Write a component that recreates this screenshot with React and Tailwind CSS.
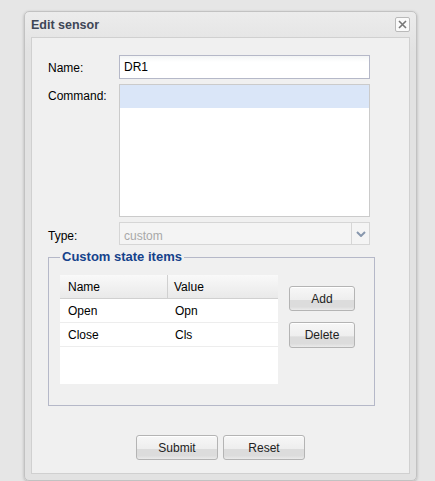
const btn =
  "h-[25px] rounded-[3px] border border-[#b4b4b4] bg-[linear-gradient(#f7f7f7_0%,#eeeeee_55%,#dcdcdc_57%,#dcdcdc_86%,#ebebeb_100%)] text-[12px] text-[#222] shadow-[inset_0_1px_0_#ffffff]";

const rows = [
  { name: 'Open', value: 'Opn' },
  { name: 'Close', value: 'Cls' },
];

const EditSensorDialog = () => {
  return (
    <div className="min-h-[481px] w-[435px] bg-[#e6e6e6] pt-[11px] font-['Liberation_Sans',Arial,sans-serif]">
      <div className="ml-[24px] w-[393px] rounded-[5px] border border-[#c2c2c2] bg-[linear-gradient(#ececec,#e2e2e2_40px,#e2e2e2)] px-[6px] pb-[6px] shadow-[0_1px_3px_rgba(0,0,0,0.25)]">
        <div className="flex h-[25px] items-center justify-between">
          <span className="pt-[1px] text-[12.5px] font-bold text-[#3e4656]">Edit sensor</span>
          <button className="flex h-[15px] w-[15px] items-center justify-center rounded-[2px] border border-[#b9b9b9] bg-[#fafafa]">
            <svg width="9" height="9" viewBox="0 0 9 9">
              <path d="M1 1L8 8M8 1L1 8" stroke="#777" strokeWidth="1.6" />
            </svg>
          </button>
        </div>

        <div className="h-[437px] border border-[#d0d0d0] bg-[#f0f0f0] pl-[16px] pt-[17px] text-[12px] text-black">
          <div className="flex">
            <label className="w-[71px] pt-[4px]">Name:</label>
            <div className="flex h-[24px] w-[251px] items-center border border-[#b5b8c8] bg-[linear-gradient(#f3f5f5,#ffffff_6px)] pl-[4px] text-[12px]">
              DR1
            </div>
          </div>

          <div className="mt-[5px] flex">
            <label className="w-[71px] pt-[3px]">Command:</label>
            <div className="h-[133px] w-[251px] border border-[#cbcbcb] bg-white">
              <div className="h-[23px] bg-[#dae6f8]" />
            </div>
          </div>

          <div className="mt-[5px] flex">
            <label className="w-[71px] pt-[5px]">Type:</label>
            <div className="flex h-[23px] w-[251px] border border-[#d6d6d6] bg-[#f4f4f4]">
              <span className="flex-1 pl-[4px] pt-[4px] text-[12px] text-[#a8a8a8]">custom</span>
              <span className="flex w-[18px] items-center justify-center border-l border-[#d6d6d6]">
                <svg width="10" height="6" viewBox="0 0 10 6">
                  <path d="M1 1L5 5L9 1" fill="none" stroke="#8797ad" strokeWidth="2" />
                </svg>
              </span>
            </div>
          </div>

          <fieldset className="mt-[4px] h-[157px] w-[327px] border border-[#b5b8c8] pl-[11px]">
            <legend className="px-[2px] text-[13px] font-bold leading-[16px] text-[#15428b]">
              Custom state items
            </legend>
            <div className="mt-[10px] flex">
              <div className="h-[109px] w-[218px] bg-white">
                <div className="flex h-[24px] border-b border-[#d0d0d0] bg-[linear-gradient(#f9f9f9,#e9e9e9)]">
                  <div className="flex w-[108px] items-center border-r border-[#d0d0d0] pl-[8px]">Name</div>
                  <div className="flex items-center pl-[6px]">Value</div>
                </div>
                {rows.map((row) => (
                  <div key={row.name} className="flex h-[24px] items-center border-b border-[#ededed]">
                    <div className="w-[108px] pl-[8px]">{row.name}</div>
                    <div className="pl-[7px]">{row.value}</div>
                  </div>
                ))}
              </div>
              <div className="ml-[11px] flex flex-col">
                <button className={`${btn} mt-[11px] w-[66px]`}>Add</button>
                <button className={`${btn} mt-[11px] h-[26px] w-[66px]`}>Delete</button>
              </div>
            </div>
          </fieldset>

          <div className="mt-[29px] flex justify-center gap-[5px] pr-[16px]">
            <button className={`${btn} w-[82px]`}>Submit</button>
            <button className={`${btn} w-[82px]`}>Reset</button>
          </div>
        </div>
      </div>
    </div>
  );
};

export default function App() {
  return <EditSensorDialog />;
}
